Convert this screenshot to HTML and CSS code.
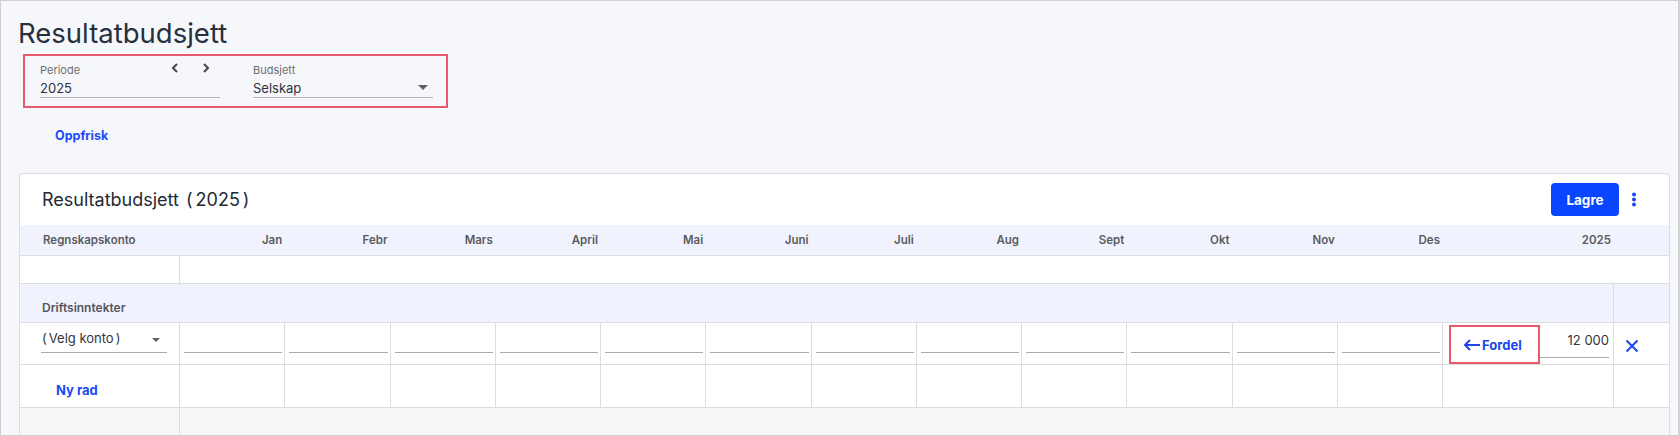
FILE: index.html
```html
<!DOCTYPE html>
<html lang="no">
<head>
<meta charset="utf-8">
<title>Resultatbudsjett</title>
<link rel="stylesheet" href="styles.css">
</head>
<body>
<div class="page">
  <h1 class="page-title">Resultatbudsjett</h1>

  <div class="filters">
    <div class="field field-periode">
      <div class="field-top">
        <span class="field-label">Periode</span>
        <span class="chevrons">
          <svg width="8" height="10" viewBox="0 0 8 10"><path d="M6 1 L2 5 L6 9" fill="none" stroke="#454545" stroke-width="2"/></svg>
          <svg width="8" height="10" viewBox="0 0 8 10"><path d="M2 1 L6 5 L2 9" fill="none" stroke="#454545" stroke-width="2"/></svg>
        </span>
      </div>
      <div class="field-value">2025</div>
    </div>
    <div class="field field-budsjett">
      <div class="field-top"><span class="field-label">Budsjett</span></div>
      <div class="field-value">
        <span>Selskap</span>
        <svg class="caret" width="10" height="5" viewBox="0 0 10 5"><path d="M0 0 H10 L5 5 Z" fill="#5f5f5f"/></svg>
      </div>
    </div>
  </div>

  <div class="refresh">Oppfrisk</div>

  <div class="card">
    <div class="card-header">
      <div class="card-title">Resultatbudsjett <span class="paren-open">(</span>2025<span class="paren-close">)</span></div>
      <div class="card-actions">
        <button class="btn-primary">Lagre</button>
        <span class="kebab">
          <svg width="6" height="16" viewBox="0 0 6 16"><circle cx="3" cy="2.5" r="2" fill="#1a47f0"/><circle cx="3" cy="7.5" r="2" fill="#1a47f0"/><circle cx="3" cy="12.5" r="2" fill="#1a47f0"/></svg>
        </span>
      </div>
    </div>

    <div class="grid-row head-row">
      <div class="hc hc-first">Regnskapskonto</div>
      <div class="hc">Jan</div>
      <div class="hc">Febr</div>
      <div class="hc">Mars</div>
      <div class="hc">April</div>
      <div class="hc">Mai</div>
      <div class="hc">Juni</div>
      <div class="hc">Juli</div>
      <div class="hc">Aug</div>
      <div class="hc">Sept</div>
      <div class="hc">Okt</div>
      <div class="hc">Nov</div>
      <div class="hc">Des</div>
      <div class="hc">2025</div>
      <div class="hc"></div>
    </div>

    <div class="grid-row empty-row">
      <div class="c c-first"></div>
      <div class="c c-rest"></div>
    </div>

    <div class="grid-row group-row">
      <div class="g g-main">Driftsinntekter</div>
      <div class="g g-end"></div>
    </div>

    <div class="grid-row input-row">
      <div class="c c-first">
        <div class="select">
          <span><span class="sp-open">(</span>Velg konto<span class="sp-close">)</span></span>
          <svg class="caret" width="8" height="4" viewBox="0 0 8 4"><path d="M0 0 H8 L4 4 Z" fill="#5f5f5f"/></svg>
        </div>
      </div>
      <div class="c c-month"><div class="line-input"></div></div>
      <div class="c c-month"><div class="line-input"></div></div>
      <div class="c c-month"><div class="line-input"></div></div>
      <div class="c c-month"><div class="line-input"></div></div>
      <div class="c c-month"><div class="line-input"></div></div>
      <div class="c c-month"><div class="line-input"></div></div>
      <div class="c c-month"><div class="line-input"></div></div>
      <div class="c c-month"><div class="line-input"></div></div>
      <div class="c c-month"><div class="line-input"></div></div>
      <div class="c c-month"><div class="line-input"></div></div>
      <div class="c c-month"><div class="line-input"></div></div>
      <div class="c c-month"><div class="line-input"></div></div>
      <div class="c c-total">
        <div class="fordel">
          <svg width="18" height="12" viewBox="0 0 18 12"><path d="M17 6 H2 M7 1 L2 6 L7 11" fill="none" stroke="#1a47f0" stroke-width="2"/></svg>
          <span>Fordel</span>
        </div>
        <div class="total-input">12 000</div>
      </div>
      <div class="c c-del">
        <svg width="14" height="14" viewBox="0 0 14 14"><path d="M1.5 1.5 L12.5 12.5 M12.5 1.5 L1.5 12.5" stroke="#1a47f0" stroke-width="2"/></svg>
      </div>
    </div>

    <div class="grid-row add-row">
      <div class="c c-first"><span class="link">Ny rad</span></div>
      <div class="c"></div>
      <div class="c"></div>
      <div class="c"></div>
      <div class="c"></div>
      <div class="c"></div>
      <div class="c"></div>
      <div class="c"></div>
      <div class="c"></div>
      <div class="c"></div>
      <div class="c"></div>
      <div class="c"></div>
      <div class="c"></div>
      <div class="c"></div>
      <div class="c c-del"></div>
    </div>

    <div class="grid-row foot-row">
      <div class="c c-first"></div>
      <div class="c c-rest"></div>
    </div>
  </div>
</div>
</body>
</html>
```

FILE: styles.css
```css
* { box-sizing: border-box; }

html, body {
  margin: 0;
  padding: 0;
}

body {
  font-family: "Inter", "Noto Sans", "Liberation Sans", sans-serif;
  color: #333;
}

.page {
  width: 1679px;
  height: 436px;
  border: 1px solid #cfcfd3;
  background: #f6f7fb;
  padding: 15px 10px 0 17px;
  overflow: hidden;
}

.page-title {
  margin: 0;
  font-size: 27.5px;
  line-height: 34px;
  font-weight: 400;
  color: #26303f;
}

.filters {
  display: flex;
  gap: 33px;
  width: 425px;
  margin: 4px 0 0 5px;
  padding: 7px 12px 8px 15px;
  border: 2px solid #e8596b;
}

.field {
  width: 180px;
  border-bottom: 1px solid #b3b5bb;
}

.field-top {
  display: flex;
  justify-content: space-between;
  align-items: center;
  height: 14px;
}

.field-label {
  font-size: 11px;
  color: #6d6d6d;
}

.chevrons {
  display: flex;
  gap: 23px;
  margin-right: 10px;
  margin-top: -4px;
}

.field-value {
  display: flex;
  justify-content: space-between;
  align-items: center;
  height: 20px;
  font-size: 13px;
  color: #2f3440;
  padding-top: 1px;
}

.caret { margin-right: 5px; }

.refresh {
  margin: 20px 0 0 37px;
  font-size: 12.5px;
  line-height: 16px;
  font-weight: 700;
  color: #1a4cf5;
}

.card {
  margin: 29px 0 0 1px;
  width: 1651px;
  background: #fff;
  border: 1px solid #dcdde1;
  border-radius: 4px;
}

.card-header {
  height: 51px;
  display: flex;
  align-items: center;
  justify-content: space-between;
  padding: 0 23px 0 22px;
}

.card-title {
  font-size: 18px;
  color: #1f2a37;
}

.paren-open { margin: 0 3px 0 2px; }
.paren-close { margin-left: 3px; }

.card-actions {
  display: flex;
  align-items: center;
  gap: 3px;
}

.btn-primary {
  width: 68px;
  height: 33px;
  border: 0;
  border-radius: 4px;
  background: #0a46ff;
  color: #fff;
  font-family: inherit;
  font-size: 13.5px;
  font-weight: 700;
}

.kebab {
  width: 24px;
  display: flex;
  justify-content: center;
  margin-top: 1px;
}

.grid-row {
  display: grid;
  grid-template-columns: 160px repeat(12, 105.25px) 171px 54px;
  border-bottom: 1px solid #dcdde1;
}

.head-row {
  height: 31px;
  background: #f0f3fd;
}

.hc {
  font-size: 11.5px;
  font-weight: 600;
  color: #5b5b5f;
  text-align: right;
  padding-right: 3px;
  line-height: 30px;
}

.hc-first {
  text-align: left;
  padding-left: 23px;
}

.c {
  border-right: 1px solid #dcdde1;
}

.c-del { border-right: 0; }

.empty-row { height: 28px; }

.c-rest {
  grid-column: 2 / -1;
  border-right: 0;
}

.group-row {
  height: 39px;
  background: #f0f3fd;
}

.g-main {
  grid-column: 1 / 15;
  border-right: 1px solid #dcdde1;
  font-size: 12px;
  font-weight: 600;
  color: #55565b;
  padding: 16px 0 0 22px;
}

.input-row { height: 42px; }

.c-first { padding: 0 12px 0 21px; }

.select {
  height: 30px;
  display: flex;
  align-items: center;
  justify-content: space-between;
  border-bottom: 1px solid #a9abb1;
  font-size: 13px;
  color: #33363d;
  padding-left: 1px;
}

.sp-open { margin-right: 2px; }
.sp-close { margin-left: 2px; }

.select .caret { margin: 4px 7px 0 0; }

.c-month { padding: 0 2px 0 4px; }

.line-input {
  height: 30px;
  border-bottom: 1px solid #a9abb1;
}

.c-total {
  display: flex;
  align-items: flex-start;
  padding: 2px 4px 0 6px;
}

.fordel {
  width: 91px;
  height: 39px;
  border: 2px solid #e8596b;
  display: flex;
  align-items: center;
  gap: 1px;
  padding: 1px 0 0 12px;
  font-size: 13px;
  font-weight: 700;
  color: #1a47f0;
}

.total-input {
  flex: 1;
  height: 33px;
  border-bottom: 1px solid #a9abb1;
  font-size: 13px;
  color: #33363d;
  text-align: right;
  line-height: 19px;
  padding-top: 6px;
}

.c-del {
  padding: 14px 0 0 11px;
}

.add-row { height: 43px; }

.add-row .c-first {
  padding: 7px 0 0 36px;
  display: flex;
  align-items: center;
}

.link {
  font-size: 13px;
  font-weight: 700;
  color: #1a4cf5;
}

.foot-row {
  height: 40px;
  background: #f7f7f8;
  border-bottom: 0;
}
```
